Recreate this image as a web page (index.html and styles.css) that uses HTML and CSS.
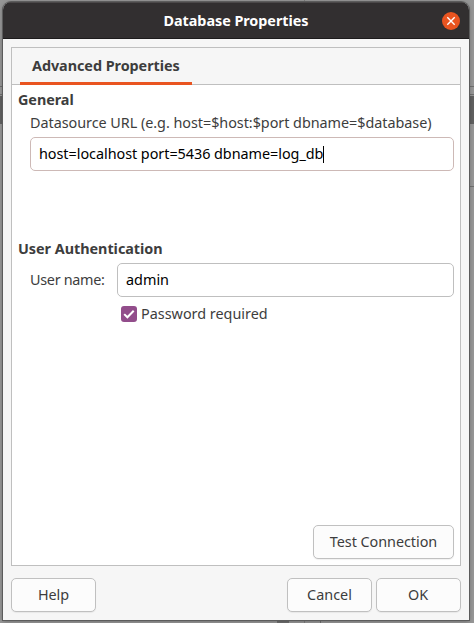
FILE: index.html
```html
<!DOCTYPE html>
<html lang="en">
<head>
<meta charset="utf-8">
<title>Database Properties</title>
<link rel="stylesheet" href="styles.css">
</head>
<body>
<main class="dialog">
  <header class="titlebar">
    <h1 class="title">Database Properties</h1>
    <button class="close" aria-label="Close"><svg width="18" height="18" viewBox="0 0 18 18"><path d="M5.3 5.3l7.4 7.4M12.7 5.3l-7.4 7.4" fill="none" stroke="#fff" stroke-width="1.4"/></svg></button>
  </header>
  <section class="panel">
    <nav class="tabs"><div class="tab">Advanced Properties</div></nav>
    <div class="content">
      <h2 class="heading general">General</h2>
      <div class="url-label">Datasource URL (e.g. host=$host:$port dbname=$database)</div>
      <div class="field url"><span>host=localhost port=5436 dbname=log_db</span><i class="caret"></i></div>
      <h2 class="heading auth">User Authentication</h2>
      <div class="user-row"><span class="user-label">User name:</span><div class="field user">admin</div></div>
      <div class="check-row"><span class="check"><svg width="16" height="16" viewBox="0 0 16 16"><path d="M3.2 8.1l3.2 3.2 6.3-6.5" fill="none" stroke="#fff" stroke-width="2"/></svg></span><span>Password required</span></div>
      <button class="btn test">Test Connection</button>
    </div>
  </section>
  <footer class="actions">
    <button class="btn help">Help</button>
    <button class="btn">Cancel</button>
    <button class="btn ok">OK</button>
  </footer>
</main>
</body>
</html>
```
FILE: styles.css
```css
* { box-sizing: border-box; }
body {
  margin: 0;
  width: 474px;
  height: 623px;
  padding: 2px 5px 3px 3px;
  overflow: hidden;
  font: 14.4px/20px "Noto Sans", sans-serif;
  color: #3d3d3d;
  background:
    linear-gradient(#6e6e6e, #6e6e6e) 0 86px / 100% 1px no-repeat,
    linear-gradient(#6e6e6e, #6e6e6e) 0 94px / 100% 1px no-repeat,
    linear-gradient(#606060, #606060) 0 96px / 100% 28px no-repeat,
    linear-gradient(#6e6e6e, #6e6e6e) 100% 186px / 6px 1px no-repeat,
    linear-gradient(#6e6e6e, #6e6e6e) 277px 100% / 12px 3px no-repeat,
    linear-gradient(#7c7c7c, #7c7c7c) 304px 0 / 1px 100% no-repeat,
    linear-gradient(#6e6e6e, #6e6e6e) 320px 100% / 1px 3px no-repeat,
    #969696;
}
h1, h2 { margin: 0; font-size: inherit; line-height: inherit; font-weight: 700; }
button { font: inherit; color: inherit; padding: 0; }
.titlebar, .tab, .heading, .url-label, .field, .user-label, .check-row, .btn { white-space: nowrap; }
.dialog {
  height: 618px;
  display: flex;
  flex-direction: column;
  background: #f6f6f6;
  border-radius: 8px 8px 0 0;
  overflow: hidden;
  box-shadow: 0 0 0 1px #5c5c5c, 0 1px 4px rgba(0, 0, 0, .35);
}
.titlebar {
  height: 37px;
  display: grid;
  grid-template-columns: 1fr auto 1fr;
  align-items: center;
  background: #322f30;
  border-top: 1px solid #4b4849;
  border-bottom: 1px solid #1d1b1c;
  color: #fff;
}
.title { grid-column: 2; letter-spacing: -.05px; }
.close {
  justify-self: end;
  margin-right: 9px;
  width: 18px;
  height: 18px;
  border: 0;
  border-radius: 50%;
  background: #e95420;
}
.close svg, .check svg { display: block; }
.panel {
  margin: 8px 8px 0;
  width: 450px;
  height: 519px;
  border: 1px solid #bfbfbf;
  background: #fff;
}
.tabs { height: 37px; background: #f6f6f6; border-bottom: 1px solid #bfbfbf; padding-left: 8px; }
.tab { width: 172px; height: 37px; border-bottom: 3px solid #e95420; padding: 8px 0 0 12px; font-weight: 700; letter-spacing: -.05px; }
.content { height: 480px; padding: 5px 6px 6px; display: flex; flex-direction: column; }
.heading { height: 20px; }
.general { letter-spacing: -.05px; }
.url-label { margin: 3px 0 0 12px; height: 20px; letter-spacing: -.04px; }
.field {
  height: 34px;
  display: flex;
  align-items: center;
  border: 1px solid #bfbfbf;
  border-radius: 5px;
  padding-left: 8px;
  color: #000;
  background: #fff;
}
.url { margin: 4px 0 0 12px; border-color: #cdb9b6; letter-spacing: -.04px; }
.caret { width: 1px; height: 17px; background: #000; }
.auth { margin-top: 68px; letter-spacing: -.03px; }
.user-row { display: flex; align-items: center; margin: 4px 0 0 12px; }
.user-label { width: 87px; letter-spacing: -.3px; }
.user { flex: 1; }
.check-row { display: flex; align-items: center; gap: 4px; margin: 7px 0 0 103px; height: 20px; }
.check { width: 16px; height: 16px; border-radius: 3px; background: #924d8b; }
.btn {
  width: 85px;
  height: 34px;
  border: 1px solid #c0c0c0;
  border-radius: 5px;
  background: #fcfcfc;
  box-shadow: 0 1px 1px rgba(0, 0, 0, .06);
}
.test { width: 141px; margin: auto 0 0 auto; letter-spacing: -.05px; }
.actions { display: flex; gap: 4px; padding: 12px 8px 8px; }
.help { margin-right: auto; letter-spacing: -.1px; }
.ok { padding-right: 1px; }
```
